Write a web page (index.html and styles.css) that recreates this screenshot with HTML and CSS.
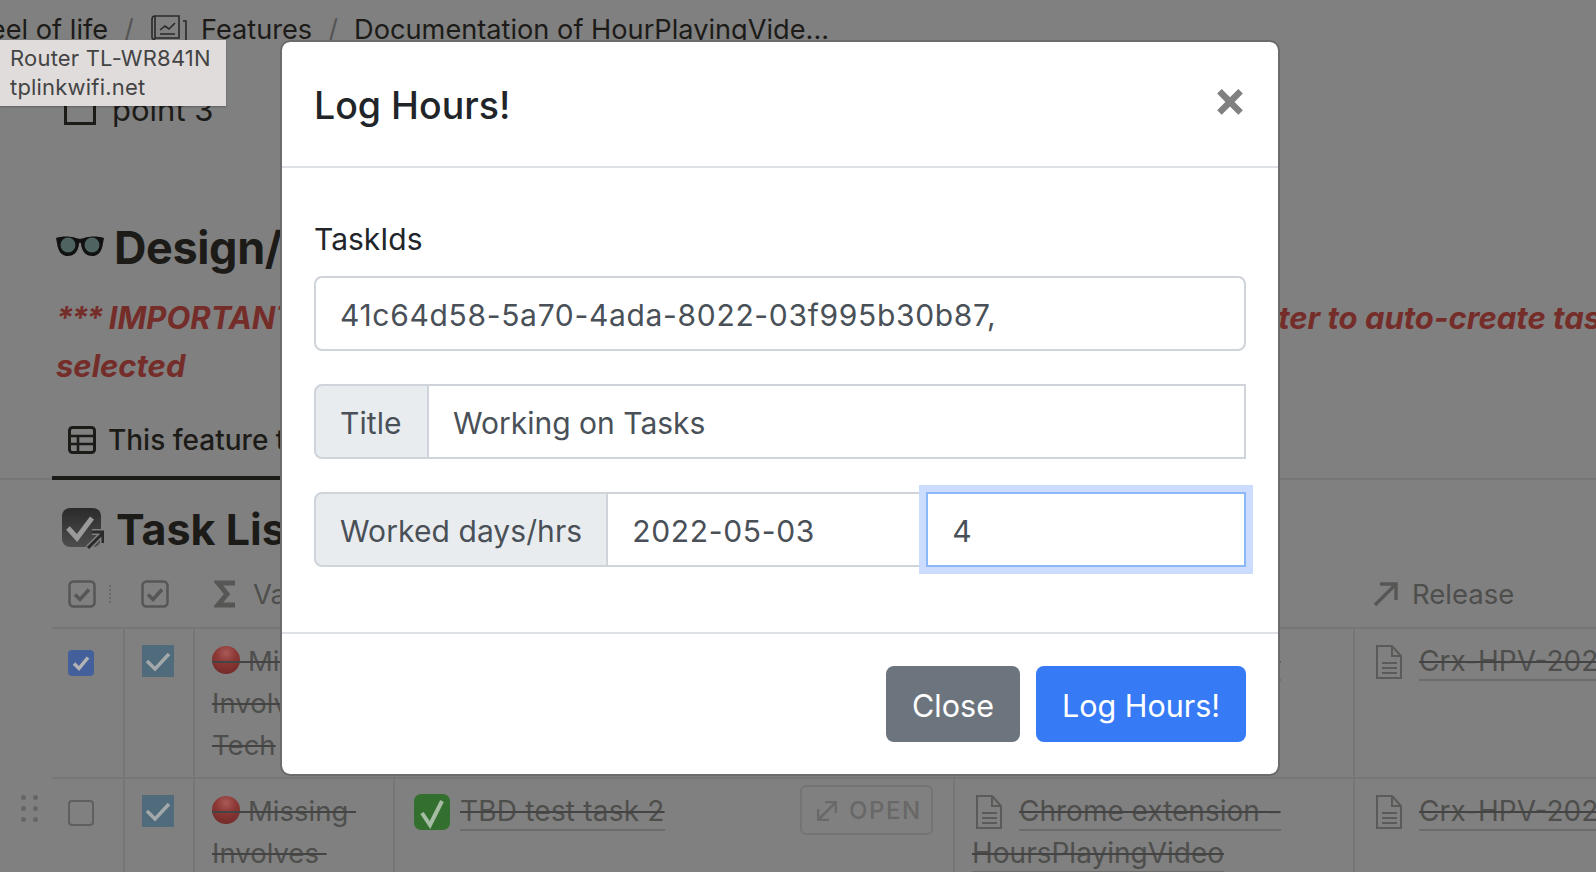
FILE: index.html
```html
<!DOCTYPE html>
<html lang="en">
<head>
<meta charset="utf-8">
<title>Log Hours</title>
<link rel="stylesheet" href="styles.css">
</head>
<body>
<svg class="defs" width="0" height="0" aria-hidden="true">
  <defs>
    <radialGradient id="ball" cx="50%" cy="25%" r="80%"><stop offset="0" stop-color="#a85a58"/><stop offset=".45" stop-color="#8c3835"/><stop offset="1" stop-color="#6f2a28"/></radialGradient>
    <linearGradient id="darkbox" x1="0" y1="0" x2="0" y2="1"><stop offset="0" stop-color="#2b2b2b"/><stop offset="1" stop-color="#4d4d4d"/></linearGradient>
    <symbol id="doc" viewBox="0 0 26 34"><path d="M1 1h15l9 10v22H1z M16 1v10h9 M6 18h15 M6 23h15 M6 28h15" fill="none" stroke="#5a5a58" stroke-width="2"/></symbol>
    <symbol id="cb" viewBox="0 0 28 28"><rect x="1.5" y="1.5" width="25" height="25" rx="4" fill="none" stroke="#565655" stroke-width="2.5"/><path d="M7 14.5l5 5 9-10" fill="none" stroke="#565655" stroke-width="3.5"/></symbol>
    <symbol id="bluecheck" viewBox="0 0 32 32"><rect width="32" height="32" fill="#4f6b7c"/><path d="M5 16l8 8 14-15" fill="none" stroke="#a3a9ab" stroke-width="3.5"/></symbol>
    <symbol id="ballline" viewBox="0 0 36 30"><circle cx="14" cy="14" r="14" fill="url(#ball)"/><path d="M0 16h36" stroke="#444" stroke-width="2"/></symbol>
  </defs>
</svg>

<main class="page">
  <nav class="crumbs">
    <span class="crumb crumb-first">Wheel of life</span>
    <span class="sep">/</span>
    <svg class="crumb-icon" viewBox="0 0 38 30"><path d="M5 2h24v22H5M5 2a3 3 0 0 0-3 3v18c0 3 3 3 3 1zM33 7h3v21H8" fill="none" stroke="#2a2a28" stroke-width="1.6"/><path d="M10 16l5-4 4 3 6-6M10 20h15" fill="none" stroke="#2a2a28" stroke-width="1.6"/></svg>
    <span class="crumb">Features</span>
    <span class="sep">/</span>
    <span class="crumb">Documentation of HourPlayingVide...</span>
  </nav>

  <div class="todo"><span class="todo-box"></span><span>point 3</span></div>

  <h2 class="design">
    <svg class="glasses" viewBox="0 0 48 24"><path d="M0 3c6-2 14-2 20 0 2 1 6 1 8 0 6-2 14-2 20 0l-1 5c-1 9-5 13-11 13S26 17 25 9c0-2-2-2-2 0-1 8-5 12-11 12S2 17 1 8z" fill="#111"/><circle cx="12" cy="10" r="7.5" fill="#4f6360"/><circle cx="36" cy="10" r="7.5" fill="#4f6360"/></svg>
    <span>Design/Architecture</span>
  </h2>

  <p class="important"><span class="stars">***</span> IMPORTANT<span class="behind">: use the database filter to auto-create tasks, </span>ter to auto-create tasks when selected</p>
  <p class="important important-second">selected</p>

  <div class="tabs">
    <div class="tab">
      <svg class="tab-icon" viewBox="0 0 28 28"><rect x="1.5" y="1.5" width="25" height="25" rx="3" fill="none" stroke="#1c1b18" stroke-width="3"/><path d="M1.5 10h25M1.5 18h25M10 10v16" fill="none" stroke="#1c1b18" stroke-width="2.6"/></svg>
      <span>This feature tasks</span>
    </div>
  </div>

  <h2 class="tasklist">
    <svg class="tl-icon" viewBox="0 0 42 42"><rect width="39" height="39" rx="8" fill="url(#darkbox)"/><path d="M6 20l9 10 15-20" fill="none" stroke="#9a9a9a" stroke-width="5"/><path d="M26 40l14-14M30 24h11v11" fill="none" stroke="#808080" stroke-width="6"/><path d="M26 40l14-14M30 24h11v11" fill="none" stroke="#2a2a2a" stroke-width="3"/></svg>
    <span>Task List</span>
  </h2>

  <div class="table">
    <div class="row row-head">
      <div class="cell"><svg class="hcb"><use href="#cb"/></svg><i class="colon"></i></div>
      <div class="cell"><svg class="hcb"><use href="#cb"/></svg></div>
      <div class="cell cell-sigma"><svg class="sigma" viewBox="0 0 22 28"><path d="M21 3H4l9 11-9 11h17" fill="none" stroke="#565655" stroke-width="5"/></svg><span>Value</span></div>
      <div class="cell"></div>
      <div class="cell"></div>
      <div class="cell cell-release"><svg class="arrow" viewBox="0 0 26 26"><path d="M2 24L23 3M7 3h16v16" fill="none" stroke="#565655" stroke-width="3.4"/></svg><span>Release</span></div>
    </div>

    <div class="row row-one">
      <div class="cell cell-check"><span class="check check-on"><svg viewBox="0 0 26 26"><path d="M6 13.5l5 5 9-11" fill="none" stroke="#b3b3b3" stroke-width="3.5"/></svg></span></div>
      <div class="cell cell-status"><svg class="bluecheck"><use href="#bluecheck"/></svg></div>
      <div class="cell cell-value"><svg class="ball"><use href="#ballline"/></svg><s>Missing Involves Tech</s></div>
      <div class="cell cell-task"><svg class="greencheck" viewBox="0 0 36 36"><rect width="36" height="36" rx="7" fill="#33702f"/><path d="M8 19l8 12L28 7" fill="none" stroke="#a6bca4" stroke-width="4"/></svg><s class="link">TBD test task 1</s></div>
      <div class="cell cell-doc"><svg class="doc"><use href="#doc"/></svg><s class="link">Chrome extension - HoursPlayingVideo</s></div>
      <div class="cell cell-doc cell-last"><svg class="doc"><use href="#doc"/></svg><s class="link">Crx-HPV-2022-05</s></div>
    </div>

    <div class="row row-two">
      <div class="cell cell-check"><span class="grip"><i></i><i></i><i></i><i></i><i></i><i></i></span><span class="check"></span></div>
      <div class="cell cell-status"><svg class="bluecheck"><use href="#bluecheck"/></svg></div>
      <div class="cell cell-value"><svg class="ball"><use href="#ballline"/></svg><s>Missing Involves </s></div>
      <div class="cell cell-task"><svg class="greencheck" viewBox="0 0 36 36"><rect width="36" height="36" rx="7" fill="#33702f"/><path d="M8 19l8 12L28 7" fill="none" stroke="#a6bca4" stroke-width="4"/></svg><s class="link">TBD test task 2</s><span class="open"><svg viewBox="0 0 20 20"><path d="M1 19L19 1M8 1h11v11M1 8v11h11" fill="none" stroke="#696968" stroke-width="2.6"/></svg>OPEN</span></div>
      <div class="cell cell-doc"><svg class="doc"><use href="#doc"/></svg><s class="link">Chrome extension - HoursPlayingVideo</s></div>
      <div class="cell cell-doc cell-last"><svg class="doc"><use href="#doc"/></svg><s class="link">Crx-HPV-2022-05</s></div>
    </div>
  </div>
</main>

<div class="tooltip"><div>Router TL-WR841N</div><div>tplinkwifi.net</div></div>

<div class="scrim">
  <section class="modal">
    <header class="modal-head">
      <h5>Log Hours!</h5>
      <span class="close">×</span>
    </header>
    <div class="modal-body">
      <label class="label">TaskIds</label>
      <div class="input input-full input-digits">41c64d58-5a70-4ada-8022-03f995b30b87,</div>
      <div class="group">
        <span class="addon addon-title">Title</span>
        <div class="input input-grow">Working on Tasks</div>
      </div>
      <div class="group">
        <span class="addon">Worked days/hrs</span>
        <div class="input input-date input-digits">2022-05-03</div>
        <div class="input input-focus">4</div>
      </div>
    </div>
    <footer class="modal-foot">
      <button class="btn btn-gray">Close</button>
      <button class="btn btn-blue">Log Hours!</button>
    </footer>
  </section>
</div>
</body>
</html>
```

FILE: styles.css
```css
* { box-sizing: border-box; }
html, body { margin: 0; padding: 0; }
body {
  width: 1596px;
  height: 872px;
  overflow: hidden;
  position: relative;
  background: #808080;
  font-family: Inter, "Liberation Sans", sans-serif;
  color: #1c1b18;
}
.defs { position: absolute; }

/* page behind the dialog */
.page { height: 872px; overflow: hidden; }

.crumbs { display: flex; align-items: center; height: 34px; margin: 12px 0 0 -53px; font-size: 27.2px; white-space: nowrap; }
.sep { color: #555; margin: 0 16px; }
.crumb-icon { width: 38px; height: 30px; margin-right: 13px; }

.todo { display: flex; align-items: center; gap: 16px; height: 36px; margin: 45px 0 0 64px; font-size: 31px; }
.todo-box { width: 32px; height: 32px; border: 3px solid #1c1b18; }

.design { display: flex; align-items: center; gap: 10px; margin: 90px 0 0 56px; height: 60px; font-size: 45px; font-weight: 700; white-space: nowrap; letter-spacing: -.4px; }
.glasses { width: 48px; height: 24px; }

.important { margin: 17px 0 0 56px; font-size: 31px; line-height: 48px; font-weight: 700; font-style: italic; color: #752d2a; white-space: nowrap; }
.important-second { margin-top: 0; }
.stars { letter-spacing: -2.2px; }
.behind { display: inline-block; width: 982px; overflow: hidden; vertical-align: bottom; opacity: 0; }

.tabs { margin-top: 20px; height: 70px; border-bottom: 2px solid #767676; }
.tab { display: flex; align-items: center; gap: 12px; height: 70px; margin-left: 52px; padding: 0 0 6px 16px; border-bottom: 4px solid #1c1b18; font-size: 28px; font-weight: 500; width: 300px; white-space: nowrap; }
.tab-icon { width: 28px; height: 28px; }

.tasklist { display: flex; align-items: center; gap: 12px; margin: 21px 0 0 62px; height: 56px; font-size: 43px; font-weight: 700; }
.tl-icon { width: 42px; height: 42px; }

.table { margin: 7px 0 0 52px; }
.row { display: grid; grid-template-columns: 73px 70px 200px 560px 400px 1fr; border-bottom: 2px solid #767676; }
.row-head { height: 65px; }
.row-one { height: 150px; }
.row-two { height: 150px; border-bottom: 0; }
.cell { border-right: 2px solid #767676; padding: 11px 8px 0 16px; position: relative; color: #4e4e4c; font-size: 27.5px; line-height: 42px; }
.cell:last-child { border-right: 0; }
.row-head .cell { border-right: 0; display: flex; align-items: center; padding-top: 0; gap: 17px; height: 60px; overflow: hidden; white-space: nowrap; }
.hcb { width: 28px; height: 28px; }
.colon { position: absolute; left: 57px; top: 21px; width: 2px; height: 18px; border-left: 2px dotted #6a6a6a; }
.sigma { width: 22px; height: 28px; flex: none; }
.cell-sigma { padding-left: 19px; }
.arrow { width: 26px; height: 26px; flex: none; }
.cell-release { padding-left: 18px; }
.row-head .cell-release { gap: 13px; }

.cell s { white-space: pre-wrap; text-decoration-thickness: 2px; text-decoration-color: #444; }
.cell s.link { white-space: normal; font-size: 28px; border-bottom: 2px solid #6c6c6b; padding-bottom: 1px; }
.cell-task s.link { letter-spacing: .2px; }
.cell-last, .cell-last s.link { white-space: nowrap; }

.cell-check { padding-top: 21px; }
.check { display: block; width: 26px; height: 26px; border: 2px solid #5f5f5f; border-radius: 4px; }
.check-on { background: #44609a; border: 0; }
.check-on svg { display: block; width: 26px; height: 26px; }
.grip { position: absolute; left: -31px; top: 16px; display: grid; grid-template-columns: 5px 5px; gap: 6px 7px; }
.grip i { width: 5px; height: 5px; border-radius: 50%; background: #666; }

.cell-status { padding-top: 16px; padding-left: 17px; }
.bluecheck { display: block; width: 32px; height: 32px; }

.cell-value { padding-left: 17px; }
.ball { width: 36px; height: 30px; vertical-align: -5px; }
.cell-task { padding-left: 19px; }
.greencheck { width: 36px; height: 36px; vertical-align: -9px; margin-right: 10px; }
.cell-doc { padding-left: 17px; }
.doc { width: 26px; height: 34px; vertical-align: -8px; margin: 0 17px 0 4px; }

.open { position: absolute; left: 405px; top: 6px; width: 133px; height: 50px; display: flex; align-items: center; gap: 12px; padding: 1px 0 0 15px; border: 2px solid #747474; border-radius: 6px; font-size: 24px; letter-spacing: 1.6px; color: #686867; font-weight: 500; }
.open svg { width: 20px; height: 20px; flex: none; }

.tooltip { position: absolute; left: 0; top: 40px; width: 226px; height: 66px; padding: 4px 10px; background: #e0dcdc; color: #444; font-size: 22px; letter-spacing: .2px; line-height: 29px; box-shadow: 0 1px 2px rgba(0,0,0,.25); white-space: nowrap; }

/* dialog */
.scrim { position: absolute; left: 0; top: 0; width: 100%; padding: 40px 0 0 280px; }
.modal { width: 1000px; background: #fff; background-clip: padding-box; border: 2px solid #6c6c6c; border-radius: 10px; color: #212529; }
.modal-head { display: flex; justify-content: space-between; align-items: flex-start; height: 126px; padding: 34px 32px 32px; border-bottom: 2px solid #dee2e6; }
.modal-head h5 { margin: 0; font-size: 37.5px; line-height: 60px; font-weight: 500; }
.close { font-size: 50px; line-height: 44px; font-weight: 700; color: #808080; margin: 0 -1px 0 0; }
.modal-body { padding: 47px 32px 32px; font-size: 30px; }
.label { display: block; height: 48px; line-height: 48px; margin-bottom: 13px; }
.input { height: 75px; border: 2px solid #ced4da; line-height: 75px; padding: 0 24px; color: #495057; white-space: nowrap; }
.input-digits { letter-spacing: .68px; }
.input-full { border-radius: 8px; margin-bottom: 33px; }
.group { display: flex; height: 75px; margin-bottom: 33px; }
.addon { background: #e9ecef; border: 2px solid #ced4da; border-radius: 8px 0 0 8px; padding: 0 24px; line-height: 75px; color: #495057; letter-spacing: .08px; white-space: nowrap; }
.addon-title { width: 115px; }
.input-grow { flex: 1; margin-left: -2px; }
.input-date { width: 322px; margin-left: -2px; }
.input-focus { flex: 1; margin-left: -2px; border-color: #8ab8f8; box-shadow: 0 0 0 7px #cbdcfe; position: relative; }
.modal-foot { display: flex; justify-content: flex-end; gap: 16px; padding: 32px; border-top: 2px solid #dee2e6; }
.btn { height: 76px; padding: 2px 0 0; border: 0; border-radius: 8px; color: #fff; font: inherit; font-size: 30.5px; }
.btn-gray { background: #6c757d; width: 134px; }
.btn-blue { background: #377af6; width: 210px; }
```
